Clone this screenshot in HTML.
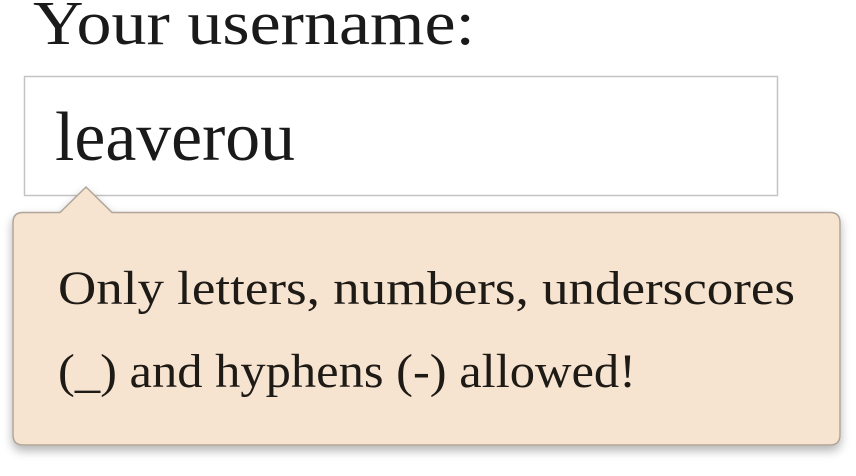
<!DOCTYPE html>
<html><head><style>
html,body{margin:0;padding:0;background:#fff;width:856px;height:476px;overflow:hidden}
</style></head><body>
<svg width="856" height="476" viewBox="0 0 856 476" xmlns="http://www.w3.org/2000/svg">
<defs>
<filter id="sh" x="-10%" y="-10%" width="120%" height="130%">
<feGaussianBlur in="SourceAlpha" stdDeviation="5"/>
<feOffset dy="5" result="b"/>
<feComponentTransfer><feFuncA type="linear" slope="0.3"/></feComponentTransfer>
<feMerge><feMergeNode/><feMergeNode in="SourceGraphic"/></feMerge>
</filter>
</defs>
<text x="33" y="44" font-family="Liberation Serif, serif" font-size="62" fill="#1a1a1a" textLength="442" lengthAdjust="spacingAndGlyphs">Your username:</text>
<rect x="24.5" y="76.5" width="753" height="119" fill="#fff" stroke="#c4c4c4" stroke-width="1.5"/>
<text x="55" y="160" font-family="Liberation Serif, serif" font-size="70" fill="#1a1a1a" textLength="240" lengthAdjust="spacingAndGlyphs">leaverou</text>
<path d="M23 212.5 L60 212.5 L86 187 L112 212.5 L830 212.5 Q840 212.5 840 222.5 L840 435 Q840 445 830 445 L23 445 Q13 445 13 435 L13 222.5 Q13 212.5 23 212.5 Z" fill="#f7e4d0" stroke="#b0a598" stroke-width="1.5" filter="url(#sh)"/>
<text x="58" y="304" font-family="Liberation Serif, serif" font-size="48" fill="#1e1a16" textLength="737" lengthAdjust="spacingAndGlyphs">Only letters, numbers, underscores</text>
<text x="58" y="387" font-family="Liberation Serif, serif" font-size="48" fill="#1e1a16" textLength="578" lengthAdjust="spacingAndGlyphs">(_) and hyphens (-) allowed!</text>
</svg>
</body></html>
